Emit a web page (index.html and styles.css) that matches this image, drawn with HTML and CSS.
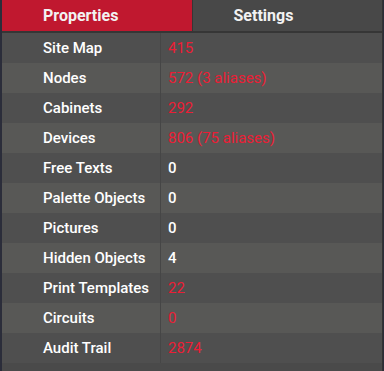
FILE: index.html
```html
<!DOCTYPE html>
<html lang="en">
<head>
  <meta charset="UTF-8">
  <title>Properties</title>
  <link rel="stylesheet" href="styles.css">
</head>
<body>
  <div class="panel">
    <div class="tabs">
      <div class="tab active">Properties</div>
      <div class="tab">Settings</div>
    </div>
    <div class="rows">
      <div class="row"><span class="name">Site Map</span><span class="value warn">415</span></div>
      <div class="row"><span class="name">Nodes</span><span class="value warn">572 (3 aliases)</span></div>
      <div class="row"><span class="name">Cabinets</span><span class="value warn">292</span></div>
      <div class="row"><span class="name">Devices</span><span class="value warn">806 (75 aliases)</span></div>
      <div class="row"><span class="name">Free Texts</span><span class="value">0</span></div>
      <div class="row"><span class="name">Palette Objects</span><span class="value">0</span></div>
      <div class="row"><span class="name">Pictures</span><span class="value">0</span></div>
      <div class="row"><span class="name">Hidden Objects</span><span class="value">4</span></div>
      <div class="row"><span class="name">Print Templates</span><span class="value warn">22</span></div>
      <div class="row"><span class="name">Circuits</span><span class="value warn">0</span></div>
      <div class="row"><span class="name">Audit Trail</span><span class="value warn">2874</span></div>
    </div>
  </div>
</body>
</html>
```

FILE: styles.css
```css
body {
  margin: 0;
  background: #2b2d3a;
  font-family: Roboto, "Liberation Sans", sans-serif;
  font-size: 15px;
  color: white;
}
.panel {
  margin-left: 2px;
  width: 380px;
  height: 371px;
  background: #4a4a4a;
  border-right: 1px solid #333;
}
.tabs {
  display: flex;
  height: 31px;
  border-bottom: 2px solid #363636;
}
.tab {
  flex: 1;
  display: flex;
  align-items: center;
  padding-left: 41px;
  font-weight: bold;
  font-size: 16px;
  background-color: #484848;
  color: #f2f2f2;
}
.tab.active {
  background-color: #c0182f;
  border-right: 1px solid #363636;
}
.row {
  display: flex;
  height: 30px;
  align-items: center;
  background-color: #4f4f4f;
}
.row:nth-child(even) {
  background-color: #585856;
}
.name {
  width: 117px;
  padding-left: 41px;
  align-self: stretch;
  display: flex;
  align-items: center;
  border-right: 1px solid #464646;
  font-weight: 500;
}
.value {
  padding-left: 7px;
  font-weight: 500;
}
.value.warn {
  color: #ec1d35;
  font-weight: normal;
}
```
